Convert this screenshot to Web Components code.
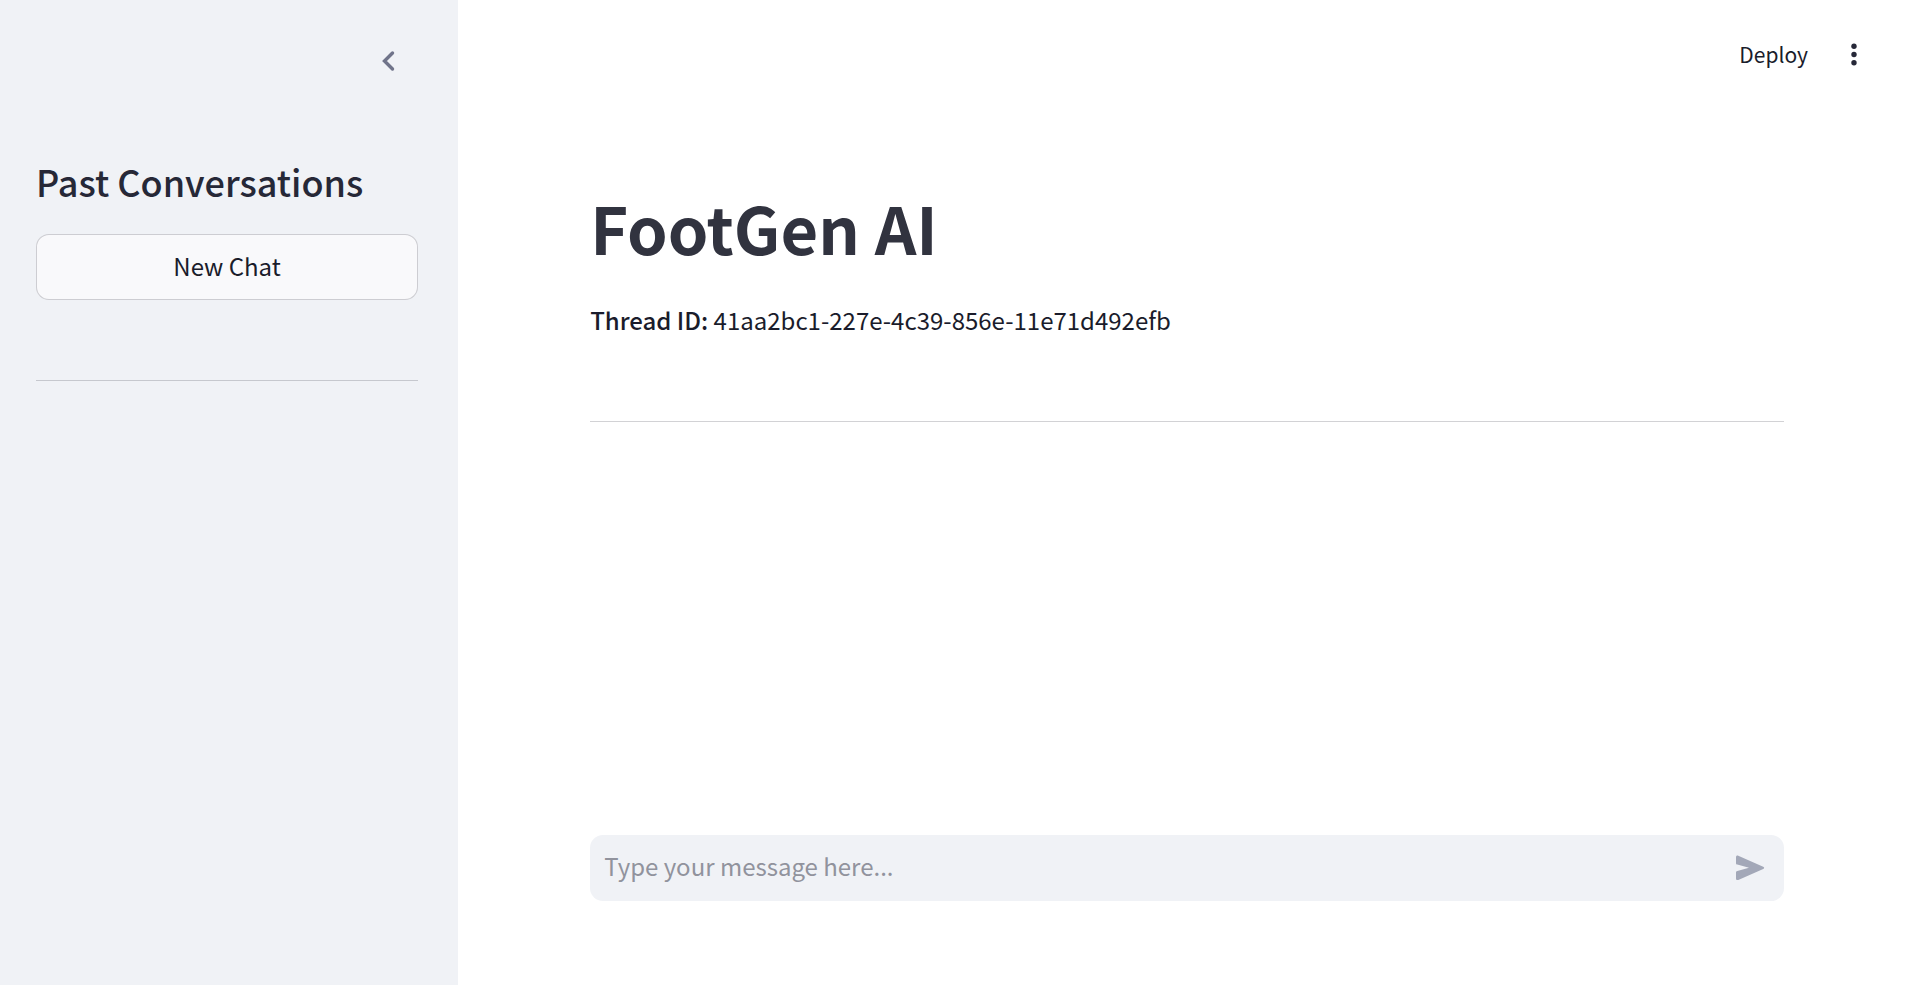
<!DOCTYPE html>
<html lang="en">
<head>
<meta charset="utf-8">
<meta name="viewport" content="width=device-width, initial-scale=1">
<title>FootGen AI</title>
<style>
  html, body { margin: 0; }
  body {
    --surface: #f0f2f6;
    --text: #31333f;
    --line: rgba(49, 51, 63, 0.22);
    font: 400 24px/42px "Noto Sans CJK SC", "Noto Sans", sans-serif;
    color: #1a1c2b;
    background: #fff;
  }
</style>
</head>
<body>
<chat-app>
  <side-bar slot="sidebar">
    <span slot="heading">Past Conversations</span>
    <action-button>New Chat</action-button>
    <rule-line></rule-line>
  </side-bar>
  <top-bar slot="header">Deploy</top-bar>
  <thread-header>
    <span slot="title">FootGen AI</span>
    <span slot="label">Thread ID:</span>
    <span slot="id">41aa2bc1-227e-4c39-856e-11e71d492efb</span>
  </thread-header>
  <message-box slot="footer" placeholder="Type your message here..."></message-box>
</chat-app>

<script>
  const define = (name, html, setup) => {
    const template = document.createElement("template");
    template.innerHTML = html;
    customElements.define(name, class extends HTMLElement {
      constructor() {
        super();
        this.attachShadow({ mode: "open" }).append(template.content.cloneNode(true));
      }
      connectedCallback() {
        if (setup) setup(this, this.shadowRoot);
      }
    });
  };

  define("chat-app", `
    <style>
      :host { display: grid; grid-template-columns: 24fr 76fr; min-height: 100vh; }
      .page { display: flex; flex-direction: column; min-width: 0; }
      main { flex: 1; padding: 80px 125px 0 132px; }
      footer { padding: 24px 125px 84px 132px; }
    </style>
    <slot name="sidebar"></slot>
    <div class="page">
      <slot name="header"></slot>
      <main><slot></slot></main>
      <footer><slot name="footer"></slot></footer>
    </div>`);

  define("side-bar", `
    <style>
      :host { display: block; background: var(--surface); padding: 36px 40px 36px 36px; }
      .top { display: flex; justify-content: flex-end; padding-right: 5px; margin-bottom: 71px; }
      button { display: grid; place-items: center; width: 48px; height: 50px; padding: 0; border: 0; background: none; color: #70748a; }
      h2 { margin: 0 0 29px; font-size: 36px; line-height: 48px; font-weight: 500; color: #262837; white-space: nowrap; }
    </style>
    <aside>
      <div class="top">
        <button type="button" aria-label="Collapse sidebar">
          <svg width="16" height="22" viewBox="0 0 16 22" fill="none" stroke="currentColor" stroke-width="3.4" stroke-linecap="round" stroke-linejoin="miter"><path d="M11.500 3 3.500 11 11.500 19"/></svg>
        </button>
      </div>
      <h2><slot name="heading"></slot></h2>
      <slot></slot>
    </aside>`);

  define("action-button", `
    <style>
      :host { display: block; }
      button { display: block; box-sizing: border-box; width: 100%; height: 66px; padding: 0 12px 2px; border: 1px solid var(--line); border-radius: 13px; background: #f9f9fb; color: inherit; font: inherit; }
    </style>
    <button type="button"><slot></slot></button>`);

  define("rule-line", `
    <style>
      :host { display: block; margin-top: 80px; }
      hr { margin: 0; border: 0; border-top: 1px solid var(--line); }
    </style>
    <hr>`);

  define("top-bar", `
    <style>
      :host { display: block; }
      header { display: flex; justify-content: flex-end; align-items: center; height: 108px; gap: 34px; padding-right: 43px; }
      button { display: block; padding: 0; border: 0; background: none; color: inherit; font: inherit; font-size: 21px; line-height: 36px; }
      svg { display: block; }
    </style>
    <header>
      <button type="button"><slot></slot></button>
      <button type="button" aria-label="Main menu">
        <svg width="24" height="24" viewBox="0 0 24 24" fill="#262838"><circle cx="12" cy="4.300" r="2.700"/><circle cx="12" cy="12.500" r="2.700"/><circle cx="12" cy="20.700" r="2.700"/></svg>
      </button>
    </header>`);

  define("thread-header", `
    <style>
      :host { display: block; }
      h1 { margin: 0 0 33px; font-size: 65px; line-height: 78px; font-weight: 700; color: var(--text); }
      p { margin: 0; }
      strong { font-weight: 500; }
    </style>
    <h1><slot name="title"></slot></h1>
    <p><strong><slot name="label"></slot></strong> <slot name="id"></slot></p>
    <rule-line></rule-line>`);

  define("message-box", `
    <style>
      :host { display: block; }
      form { display: flex; align-items: center; height: 66px; padding: 0 15px 0 14px; border-radius: 13px; background: var(--surface); }
      input { flex: 1; min-width: 0; height: 42px; margin-bottom: 4px; padding: 0; border: 0; outline: 0; background: none; color: inherit; font: inherit; }
      input::placeholder { color: #91939d; opacity: 1; }
      button { display: grid; place-items: center; width: 38px; height: 42px; padding: 0; border: 0; background: none; }
    </style>
    <form>
      <input type="text" aria-label="Message">
      <button type="button" aria-label="Send message">
        <svg width="30" height="26" viewBox="0 0 30 26" fill="#a3a8b8"><path d="M1 2.200C1 .9 2 .2 3.300.7L28.200 11.700C29.500 12.300 29.500 13.300 28.200 13.900L3.300 24.900C2 25.400 1 24.700 1 23.400V17.700C1 16.700 1.400 16.200 2.300 16L14 12.800 2.300 9.600C1.400 9.400 1 8.900 1 7.900Z"/></svg>
      </button>
    </form>`, (host, root) => {
      root.querySelector("input").placeholder = host.getAttribute("placeholder") || "";
    });
</script>
</body>
</html>
